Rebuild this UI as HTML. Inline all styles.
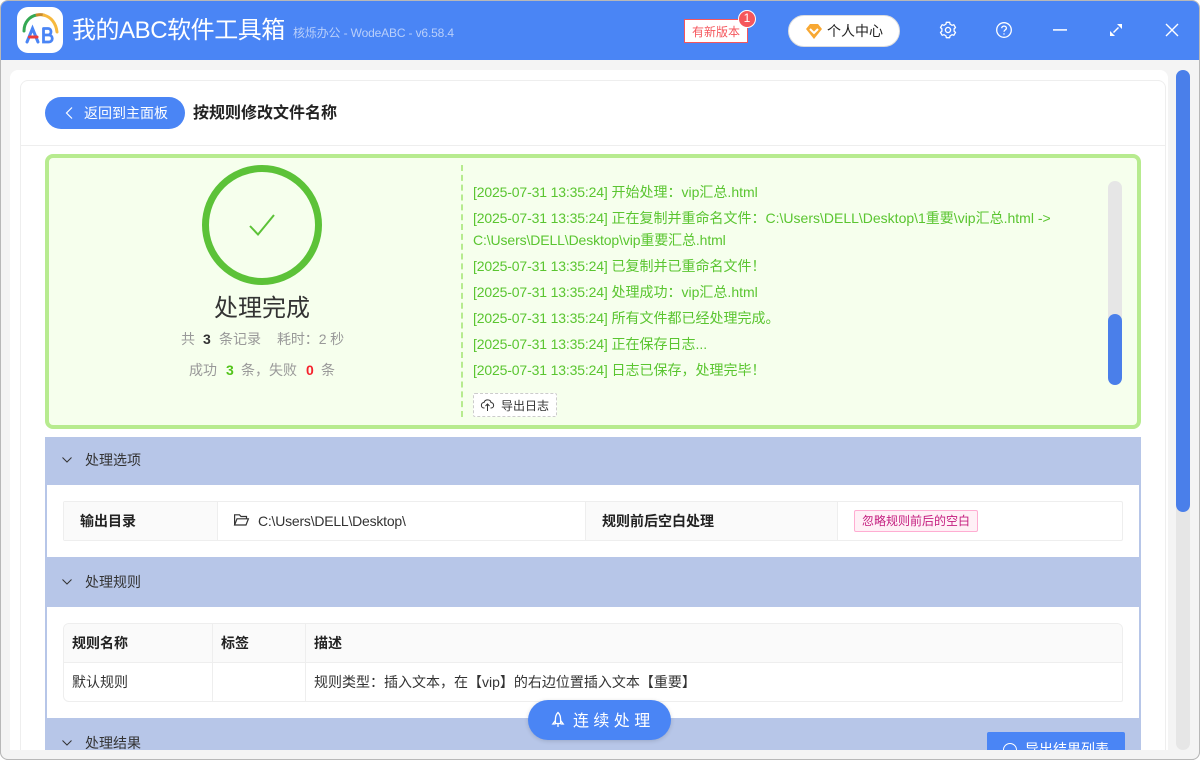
<!DOCTYPE html>
<html lang="zh"><head><meta charset="utf-8"><title>我的ABC软件工具箱</title>
<style>
*{box-sizing:border-box}
html,body{margin:0;padding:0;width:1200px;height:760px;overflow:hidden;background:#fff;font-family:"Liberation Sans","Noto Sans CJK SC",sans-serif;}
.a{position:absolute;white-space:nowrap}
svg{position:absolute;overflow:visible}
.log{position:absolute;left:473px;font-size:14px;line-height:20px;color:#5ac530;white-space:nowrap}
.log span{letter-spacing:-.15px}
.h{position:absolute;left:45px;width:1096px;background:#b7c6e8}
.ht{position:absolute;left:85px;font-size:14px;color:#333;line-height:20px}
.b{font-weight:700;color:#222;font-size:14px}
.s{font-size:14px;line-height:20px;color:#999}
</style></head><body>
<div class="a" style="left:0;top:0;width:1200px;height:760px;background:#f4f4f4;border:1px solid #b8b8b8;border-radius:8px;overflow:hidden">
<div class="a" style="left:0;top:0;width:1198px;height:59px;background:#4a85f5"></div>
</div>
<!-- logo -->
<div class="a" style="left:17px;top:7px;width:46px;height:46px;background:#fff;border-radius:11px"></div>
<svg style="left:17px;top:7px" width="46" height="46" fill="none" stroke-linecap="round">
<path d="M7 24C7 15 13 9 20 8" stroke="#34a853" stroke-width="3"/>
<path d="M20 8C22 7.600 25 7.600 27 8.200" stroke="#c98a2a" stroke-width="3"/>
<path d="M27 8.200C34 10 39 16 40 25" stroke="#f7b93e" stroke-width="3"/>
<path d="M10 35L15.500 21.500L21 35" stroke="#4a85f5" stroke-width="3"/>
<path d="M12.500 30H20" stroke="#ea3c3c" stroke-width="3"/>
<path d="M26.500 21.500V35H31.500C36.500 35 36.500 28 31.500 28H26.500M26.500 21.500H31C35 21.500 35 28 31 28" stroke="#4a85f5" stroke-width="2.800"/>
</svg>
<div class="a" style="left:72px;top:14px;font-size:24px;line-height:34px;color:#fff;letter-spacing:-.45px">我的ABC软件工具箱</div>
<div class="a" style="left:293px;top:24px;font-size:12px;line-height:18px;color:#b9cffa;letter-spacing:-.15px">核烁办公 - WodeABC - v6.58.4</div>
<!-- new version -->
<div class="a" style="left:684px;top:19px;width:64px;height:24px;background:#fff;border:1px solid #f5565c;color:#f5565c;font-size:12px;line-height:24px;text-align:center">有新版本</div>
<div class="a" style="left:738px;top:10px;width:18px;height:18px;border-radius:50%;background:#f5565c;border:1.5px solid #fff;color:#fff;font-size:12px;line-height:15px;text-align:center">1</div>
<!-- user -->
<div class="a" style="left:788px;top:15px;width:112px;height:32px;background:#fff;border:1px solid #ddd;border-radius:16px"></div>
<svg style="left:806px;top:24px" width="16" height="16"><path d="M4 0H12L16 5L8 15L0 5Z" fill="#f8a832"/><path d="M4 5L8 9L12 5" fill="none" stroke="#fff" stroke-width="2"/></svg>
<div class="a" style="left:827px;top:21px;font-size:14px;line-height:20px;color:#222">个人中心</div>
<!-- window icons -->
<svg style="left:948px;top:30px" width="1" height="1" fill="none" stroke="#fff" stroke-width="1.300" stroke-linejoin="round">
<g><path d="M-3.100-5.300L-2-5.900L-1.700-7.700H1.700L2-5.900L3.100-5.300"/><path transform="rotate(60)" d="M-3.100-5.300L-2-5.900L-1.700-7.700H1.700L2-5.900L3.100-5.300"/><path transform="rotate(120)" d="M-3.100-5.300L-2-5.900L-1.700-7.700H1.700L2-5.900L3.100-5.300"/><path transform="rotate(180)" d="M-3.100-5.300L-2-5.900L-1.700-7.700H1.700L2-5.900L3.100-5.300"/><path transform="rotate(240)" d="M-3.100-5.300L-2-5.900L-1.700-7.700H1.700L2-5.900L3.100-5.300"/><path transform="rotate(300)" d="M-3.100-5.300L-2-5.900L-1.700-7.700H1.700L2-5.900L3.100-5.300"/></g>
<circle r="2.600"/></svg>
<svg style="left:996px;top:22px" width="16" height="16" fill="none" stroke="#fff" stroke-width="1.300"><circle cx="8" cy="8" r="7.300"/><path d="M5.700 6.200C5.800 3.400 10.400 3.400 10.400 6.200C10.400 8 8 7.800 8 9.800"/><path d="M8 11.300V12.600"/></svg>
<svg style="left:1053px;top:29px" width="14" height="2"><rect width="14" height="1.800" fill="#fff" opacity=".85"/></svg>
<svg style="left:1109px;top:23px" width="14" height="14" fill="#fff"><path d="M4.500 9.500L9.500 4.500" stroke="#fff" stroke-width="1.400"/><path d="M8 1H13V6Z"/><path d="M1 8V13H6Z"/></svg>
<svg style="left:1165px;top:23px" width="14" height="14" stroke="#fff" stroke-width="1.400"><path d="M1 1L13 13M13 1L1 13"/></svg>
<!-- panels -->
<div class="a" style="left:10px;top:70px;width:1158px;height:680px;background:#fff;border-radius:8px 8px 0 0"></div>
<div class="a" style="left:20px;top:80px;width:1146px;height:670px;background:#fff;border:1px solid #eee;border-bottom:0;border-radius:8px 8px 0 0"></div>
<div class="a" style="left:21px;top:145px;width:1144px;height:1px;background:#eee"></div>
<!-- back -->
<div class="a" style="left:45px;top:97px;width:140px;height:32px;background:#4a85f5;border-radius:16px"></div>
<svg style="left:65px;top:107px" width="8" height="12" fill="none" stroke="#fff" stroke-width="1.200"><path d="M7 .5L1.500 6L7 11.500"/></svg>
<div class="a" style="left:84px;top:103px;font-size:14px;line-height:20px;color:#fff">返回到主面板</div>
<div class="a" style="left:193px;top:102px;font-size:16px;line-height:24px;color:#222;font-weight:700">按规则修改文件名称</div>
<!-- success box -->
<div class="a" style="left:45px;top:154px;width:1096px;height:275px;background:#f6ffed;border:4px solid #b7eb8f;border-radius:8px"></div>
<div class="a" style="left:202px;top:165px;width:120px;height:120px;border:7px solid #5cc238;border-radius:50%"></div>
<svg style="left:249px;top:214px" width="26" height="22" fill="none" stroke="#5cc238" stroke-width="2"><path d="M1 12L9 20.500L25 1"/></svg>
<div class="a" style="left:162px;width:200px;top:292px;text-align:center;font-size:24px;line-height:34px;color:#333">处理完成</div>
<div class="a s" style="left:181px;top:329px">共</div>
<div class="a s" style="left:203px;top:329px;color:#333;font-weight:700">3</div>
<div class="a s" style="left:219px;top:329px">条记录</div>
<div class="a s" style="left:277px;top:329px;letter-spacing:-.1px">耗时：2 秒</div>
<div class="a s" style="left:189px;top:360px">成功</div>
<div class="a s" style="left:226px;top:360px;color:#52c41a;font-weight:700">3</div>
<div class="a s" style="left:241px;top:360px">条，失败</div>
<div class="a s" style="left:306px;top:360px;color:#f5222d;font-weight:700">0</div>
<div class="a s" style="left:321px;top:360px">条</div>
<div class="a" style="left:461px;top:165px;height:252px;border-left:2px dashed #b7eb8f"></div>
<div class="log" style="top:182px"><span>[2025-07-31 13:35:24]</span> 开始处理：vip汇总.html</div>
<div class="log" style="top:208px"><span>[2025-07-31 13:35:24]</span> 正在复制并重命名文件：C:\Users\DELL\Desktop\1重要\vip汇总.html -&gt;</div>
<div class="log" style="top:230px;letter-spacing:-.12px">C:\Users\DELL\Desktop\vip重要汇总.html</div>
<div class="log" style="top:256px"><span>[2025-07-31 13:35:24]</span> 已复制并已重命名文件！</div>
<div class="log" style="top:282px"><span>[2025-07-31 13:35:24]</span> 处理成功：vip汇总.html</div>
<div class="log" style="top:308px"><span>[2025-07-31 13:35:24]</span> 所有文件都已经处理完成。</div>
<div class="log" style="top:334px"><span>[2025-07-31 13:35:24]</span> 正在保存日志...</div>
<div class="log" style="top:360px"><span>[2025-07-31 13:35:24]</span> 日志已保存，处理完毕！</div>
<div class="a" style="left:1108px;top:181px;width:14px;height:204px;background:#e6e6e6;border-radius:7px"></div>
<div class="a" style="left:1108px;top:314px;width:14px;height:71px;background:#4a7fea;border-radius:7px"></div>
<div class="a" style="left:473px;top:393px;width:84px;height:24px;background:#fff;border:1px dashed #ccc;border-radius:2px"></div>
<svg style="left:481px;top:399px" width="13" height="12" fill="none" stroke="#333" stroke-width="1"><path d="M3.500 9H3C-.5 9 -.5 3.500 3 3.500C4 0 9.500 0 10 3.500C13.500 4 13.500 9 10 9H9.500"/><path d="M6.500 12V5M4.500 7L6.500 5L8.500 7"/></svg>
<div class="a" style="left:501px;top:396px;font-size:12px;line-height:20px;color:#333">导出日志</div>
<!-- section 1 -->
<div class="h" style="top:437px;height:48px"></div>
<svg style="left:62px;top:457px" width="10" height="6" fill="none" stroke="#333"><path d="M.5 .5L5 5L9.500 .5"/></svg>
<div class="ht" style="top:450px">处理选项</div>
<div class="a" style="left:45px;top:485px;width:1096px;height:72px;background:#fff;border-left:2px solid #b7c6e8;border-right:2px solid #b7c6e8"></div>
<div class="a" style="left:63px;top:501px;width:1060px;height:40px;background:#fff;border:1px solid #eee;border-radius:2px"></div>
<div class="a" style="left:64px;top:502px;width:154px;height:38px;background:#fafafa;border-right:1px solid #eee"></div>
<div class="a" style="left:585px;top:502px;width:253px;height:38px;background:#fafafa;border-left:1px solid #eee;border-right:1px solid #eee"></div>
<div class="a b" style="left:80px;top:511px;line-height:20px">输出目录</div>
<svg style="left:234px;top:514px" width="15" height="12" fill="none" stroke="#333" stroke-width="1.200"><path d="M.6 11V.8H5.500L7 2.500H12.500V4.800"/><path d="M.6 11L3 4.800H14.400L12 11Z"/></svg>
<div class="a" style="left:258px;top:511px;font-size:14px;line-height:20px;color:#333;letter-spacing:-.22px">C:\Users\DELL\Desktop\</div>
<div class="a b" style="left:602px;top:511px;line-height:20px">规则前后空白处理</div>
<div class="a" style="left:854px;top:510px;width:124px;height:22px;background:#fff0f6;border:1px solid #ffadd2;border-radius:2px;color:#c41d7f;font-size:12px;line-height:21px;text-align:center">忽略规则前后的空白</div>
<!-- section 2 -->
<div class="h" style="top:557px;height:50px"></div>
<svg style="left:62px;top:579px" width="10" height="6" fill="none" stroke="#333"><path d="M.5 .5L5 5L9.500 .5"/></svg>
<div class="ht" style="top:572px">处理规则</div>
<div class="a" style="left:45px;top:607px;width:1096px;height:111px;background:#fff;border-left:2px solid #b7c6e8;border-right:2px solid #b7c6e8"></div>
<div class="a" style="left:63px;top:623px;width:1060px;height:79px;background:#fff;border:1px solid #eee;border-radius:6px 6px 2px 6px;overflow:hidden">
<div class="a" style="left:0;top:0;width:1058px;height:39px;background:#fafafa;border-bottom:1px solid #eee"></div>
<div class="a" style="left:148px;top:0;width:1px;height:78px;background:#eee"></div>
<div class="a" style="left:241px;top:0;width:1px;height:78px;background:#eee"></div>
</div>
<div class="a b" style="left:72px;top:633px;line-height:20px">规则名称</div>
<div class="a b" style="left:221px;top:633px;line-height:20px">标签</div>
<div class="a b" style="left:314px;top:633px;line-height:20px">描述</div>
<div class="a" style="left:72px;top:672px;font-size:14px;line-height:20px;color:#333">默认规则</div>
<div class="a" style="left:314px;top:672px;font-size:14px;line-height:20px;color:#333">规则类型：插入文本，在【vip】的右边位置插入文本【重要】</div>
<!-- section 3 -->
<div class="h" style="top:718px;height:32px"></div>
<svg style="left:62px;top:740px" width="10" height="6" fill="none" stroke="#333"><path d="M.5 .5L5 5L9.500 .5"/></svg>
<div class="ht" style="top:733px">处理结果</div>
<div class="a" style="left:987px;top:732px;width:138px;height:18px;background:#4a85f5;border-radius:2px 2px 0 0;overflow:hidden">
<div class="a" style="left:38px;top:7px;font-size:14px;line-height:20px;color:#fff">导出结果列表</div>
<svg style="left:16px;top:11px" width="14" height="14" fill="none" stroke="#fff"><circle cx="7" cy="7" r="6.500"/></svg>
</div>
<!-- floating button -->
<div class="a" style="left:528px;top:700px;width:143px;height:40px;background:#4a85f5;border-radius:20px;box-shadow:0 1px 4px rgba(0,0,0,.15)"></div>
<svg style="left:552px;top:712px" width="12" height="15" fill="none" stroke="#fff" stroke-width="1.300"><path d="M6 .5C8 2.500 8.600 5 8.600 7.500V11.500H3.400V7.500C3.400 5 4 2.500 6 .5Z"/><path d="M3.400 8.500L.8 12H3.400M8.600 8.500L11.200 12H8.600M6 12V15"/></svg>
<div class="a" style="left:573px;top:711px;font-size:16px;line-height:22px;color:#fff;letter-spacing:4.400px">连续处理</div>
<!-- page scrollbar -->
<div class="a" style="left:1176px;top:70px;width:14px;height:680px;background:#e6e6e6;border-radius:7px"></div>
<div class="a" style="left:1176px;top:70px;width:14px;height:442px;background:#4a7fea;border-radius:7px"></div>
<div class="a" style="left:0;top:750px;width:1200px;height:10px;background:#f4f4f4;border:1px solid #b8b8b8;border-top:0;border-radius:0 0 8px 8px"></div>
</body></html>
